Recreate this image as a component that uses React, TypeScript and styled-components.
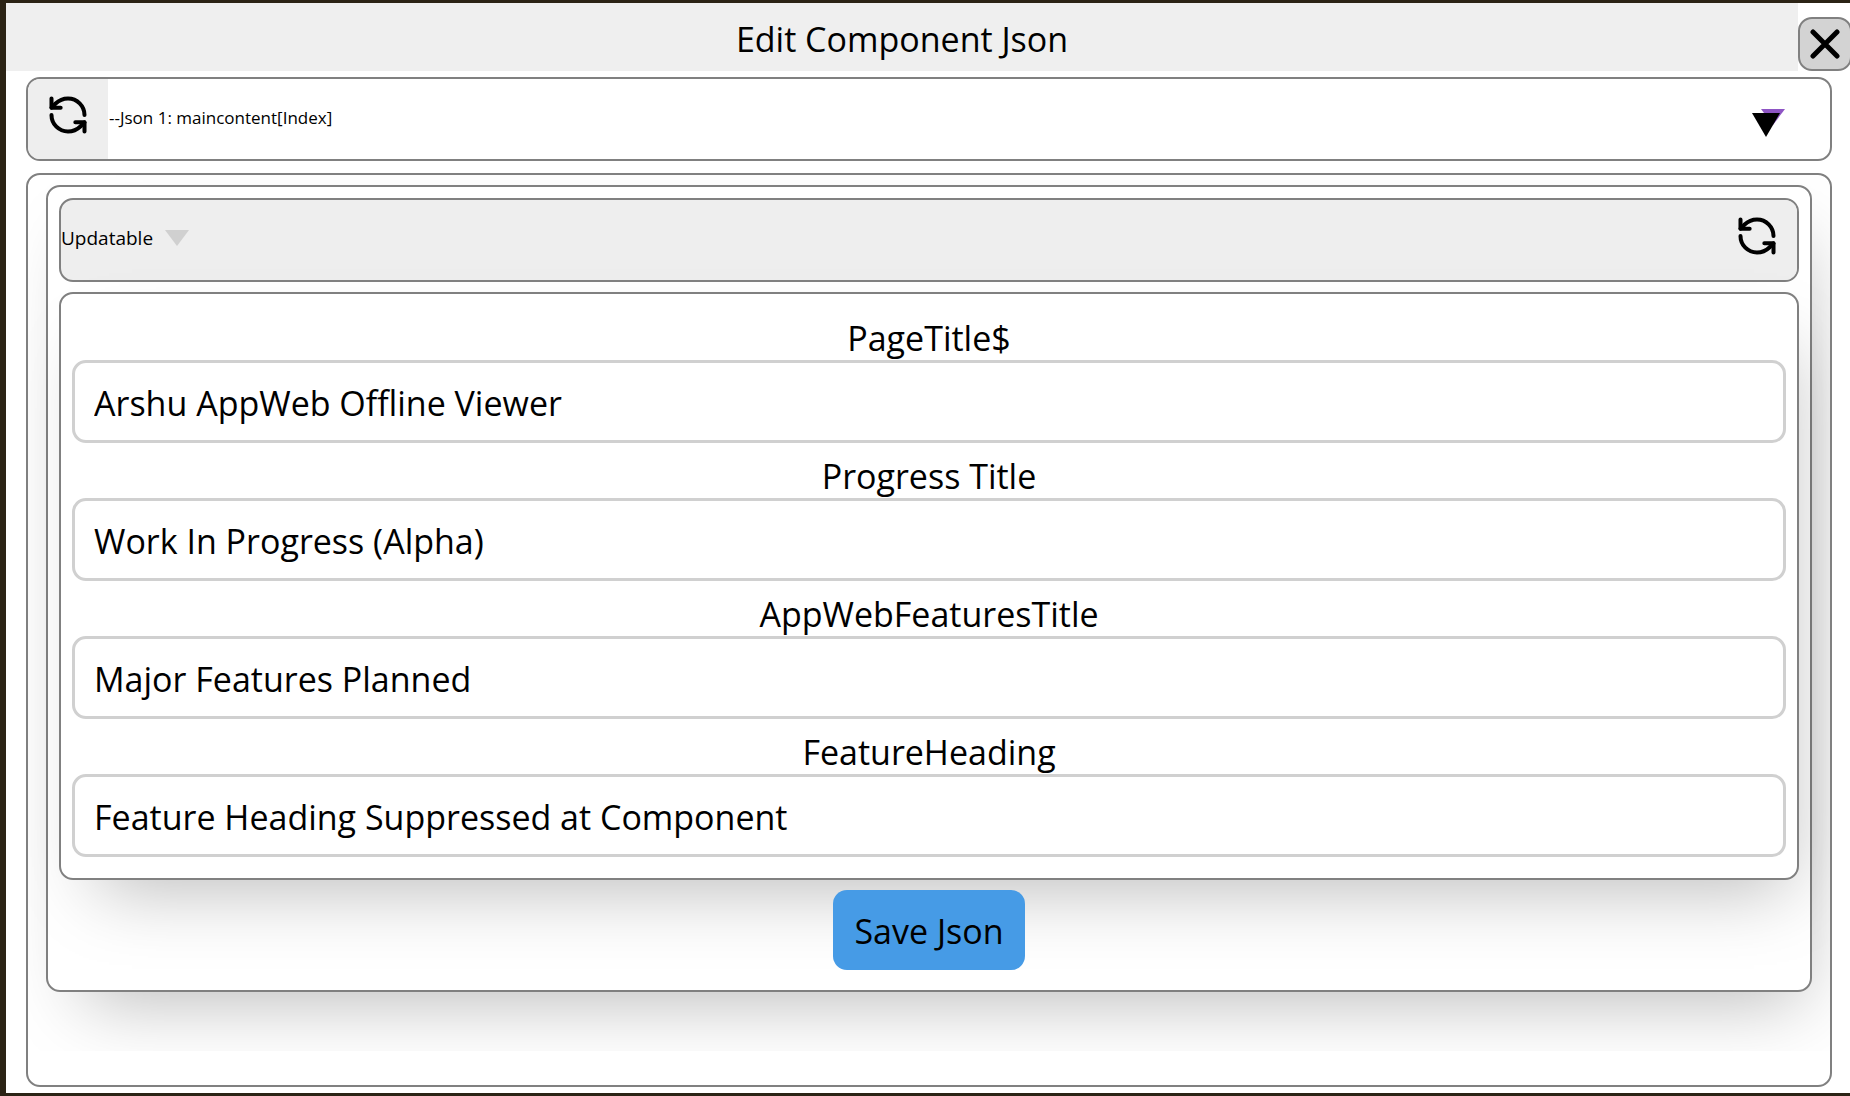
import React, { useState } from "react";
import styled, { createGlobalStyle } from "styled-components";

const LINE = "#808080";
const PANEL_SHADOW = "14px 33px 70px -24px rgba(0, 0, 0, 0.27)";

const GlobalStyle = createGlobalStyle`
  *, *::before, *::after { box-sizing: border-box; }
  html, body { margin: 0; }
  body {
    background: #2b2315;
    color: #000;
    font-family: "Open Sans", "Noto Sans", sans-serif;
    font-size: 34px;
    font-weight: 400;
    line-height: 48px;
  }
  button, input, select { font: inherit; color: inherit; }
`;

const Dialog = styled.main`
  display: flex;
  flex-direction: column;
  min-height: calc(100vh - 6px);
  margin: 3px 0 3px 6px;
  padding-bottom: 6px;
  background: #fff;
  overflow: hidden;
`;

const Header = styled.header`
  display: flex;
  align-items: flex-end;
  height: 68px;
  margin-bottom: 6px;
`;

const Title = styled.h1`
  flex: 1;
  min-width: 0;
  height: 100%;
  margin: 0;
  padding-top: 12px;
  background: #efefef;
  font-size: inherit;
  font-weight: inherit;
  text-align: center;
`;

const CloseButton = styled.button`
  display: grid;
  place-items: center;
  flex: none;
  width: 54px;
  height: 54px;
  margin-right: -2px;
  padding: 0;
  border: 2px solid ${LINE};
  border-radius: 14px;
  background: #d3d3d3;
`;

const Bar = styled.div<{ $filled?: boolean }>`
  display: flex;
  align-items: center;
  height: 84px;
  border: 2px solid ${LINE};
  border-radius: 14px;
  background: ${(p) => (p.$filled ? "#eee" : "#fff")};
  overflow: hidden;
`;

const JsonBar = styled(Bar)`
  margin: 0 18px 12px 20px;
`;

const IconButton = styled.button`
  display: grid;
  place-items: center;
  flex: none;
  width: 80px;
  height: 80px;
  padding: 0 0 8px;
  border: 0;
  background: #eee;
`;

const SelectWrap = styled.div`
  display: grid;
  grid-template-columns: 1fr 80px;
  align-items: center;
  flex: 1;
  height: 100%;
`;

const JsonSelect = styled.select`
  grid-area: 1 / 1 / 2 / 3;
  height: 100%;
  padding: 0 0 2px 1px;
  border: 0;
  background: transparent;
  appearance: none;
  font-size: 17px;
`;

const SelectMarker = styled.svg`
  grid-area: 1 / 2;
  margin-top: 8px;
  pointer-events: none;
`;

const Outer = styled.section`
  flex: 1;
  margin: 0 18px 0 20px;
  padding-bottom: 34px;
  border: 2px solid ${LINE};
  border-radius: 14px;
  overflow: hidden;
`;

const Scroller = styled.div`
  height: 100%;
  padding: 10px 18px 59px;
  overflow: hidden;
`;

const Panel = styled.form`
  display: flex;
  flex-direction: column;
  gap: 10px;
  padding: 11px 11px 20px;
  border: 2px solid ${LINE};
  border-radius: 14px;
  background: #fff;
  box-shadow: ${PANEL_SHADOW};
`;

const Toggle = styled.button`
  display: flex;
  align-items: center;
  gap: 12px;
  flex: 1;
  height: 100%;
  padding: 0 0 4px;
  border: 0;
  background: transparent;
  font-size: 19px;
`;

const Fields = styled.div`
  display: flex;
  flex-direction: column;
  gap: 12px;
  padding: 23px 11px 21px;
  border: 2px solid ${LINE};
  border-radius: 14px;
  background: #fff;
  box-shadow: ${PANEL_SHADOW};
`;

const Field = styled.div`
  display: flex;
  flex-direction: column;
`;

const Label = styled.label`
  line-height: 43px;
  text-align: center;
`;

const TextInput = styled.input`
  width: 100%;
  height: 83px;
  padding: 2px 19px 0;
  border: 3px solid #d0d0d0;
  border-radius: 14px;
  background: #fff;
  outline: 0;
`;

const SaveButton = styled.button`
  align-self: center;
  height: 80px;
  padding: 2px 21px 0;
  border: 0;
  border-radius: 14px;
  background: #469be6;
`;

const RefreshIcon = () => (
  <svg width="44" height="44" viewBox="0 0 24 24" fill="none" stroke="#000" strokeWidth="2.2" strokeLinecap="round" strokeLinejoin="round" aria-hidden="true">
    <path d="M21 12a9 9 0 0 0-9-9 9.75 9.75 0 0 0-6.74 2.74L3 8" />
    <path d="M3 3v5h5" />
    <path d="M3 12a9 9 0 0 0 9 9 9.75 9.75 0 0 0 6.74-2.74L21 16" />
    <path d="M16 16h5v5" />
  </svg>
);

const CloseIcon = () => (
  <svg width="30" height="30" viewBox="0 0 30 30" stroke="#000" strokeWidth="5" strokeLinecap="round" aria-hidden="true">
    <path d="M3 3L27 27M27 3L3 27" />
  </svg>
);

const initialFields = [
  { id: "page-title", label: "PageTitle$", value: "Arshu AppWeb Offline Viewer" },
  { id: "progress-title", label: "Progress Title", value: "Work In Progress (Alpha)" },
  { id: "features-title", label: "AppWebFeaturesTitle", value: "Major Features Planned" },
  { id: "feature-heading", label: "FeatureHeading", value: "Feature Heading Suppressed at Component" },
];

export default function App() {
  const [fields, setFields] = useState(initialFields);
  const [open, setOpen] = useState(true);

  const update = (id: string, value: string) =>
    setFields((list) => list.map((f) => (f.id === id ? { ...f, value } : f)));

  return (
    <>
      <GlobalStyle />
      <Dialog>
        <Header>
          <Title>Edit Component Json</Title>
          <CloseButton type="button" aria-label="Close">
            <CloseIcon />
          </CloseButton>
        </Header>
        <JsonBar>
          <IconButton type="button" aria-label="Reload list">
            <RefreshIcon />
          </IconButton>
          <SelectWrap>
            <JsonSelect aria-label="Json">
              <option>--Json 1: maincontent[Index]</option>
            </JsonSelect>
            <SelectMarker width="36" height="30" viewBox="0 0 36 30" aria-hidden="true">
              <path d="M11 1H35L23 17Z" fill="#8e55c4" />
              <path d="M2 5H30L16 29Z" fill="#000" />
            </SelectMarker>
          </SelectWrap>
        </JsonBar>
        <Outer>
          <Scroller>
            <Panel onSubmit={(e) => e.preventDefault()}>
              <Bar $filled>
                <Toggle type="button" aria-expanded={open} onClick={() => setOpen(!open)}>
                  Updatable
                  <svg width="24" height="16" viewBox="0 0 24 16" aria-hidden="true">
                    <path d="M0 0H24L12 16Z" fill="#d0d0d0" />
                  </svg>
                </Toggle>
                <IconButton type="button" aria-label="Reload fields">
                  <RefreshIcon />
                </IconButton>
              </Bar>
              {open && (
                <Fields>
                  {fields.map((f) => (
                    <Field key={f.id}>
                      <Label htmlFor={f.id}>{f.label}</Label>
                      <TextInput id={f.id} value={f.value} onChange={(e) => update(f.id, e.target.value)} />
                    </Field>
                  ))}
                </Fields>
              )}
              <SaveButton type="submit">Save Json</SaveButton>
            </Panel>
          </Scroller>
        </Outer>
      </Dialog>
    </>
  );
}
